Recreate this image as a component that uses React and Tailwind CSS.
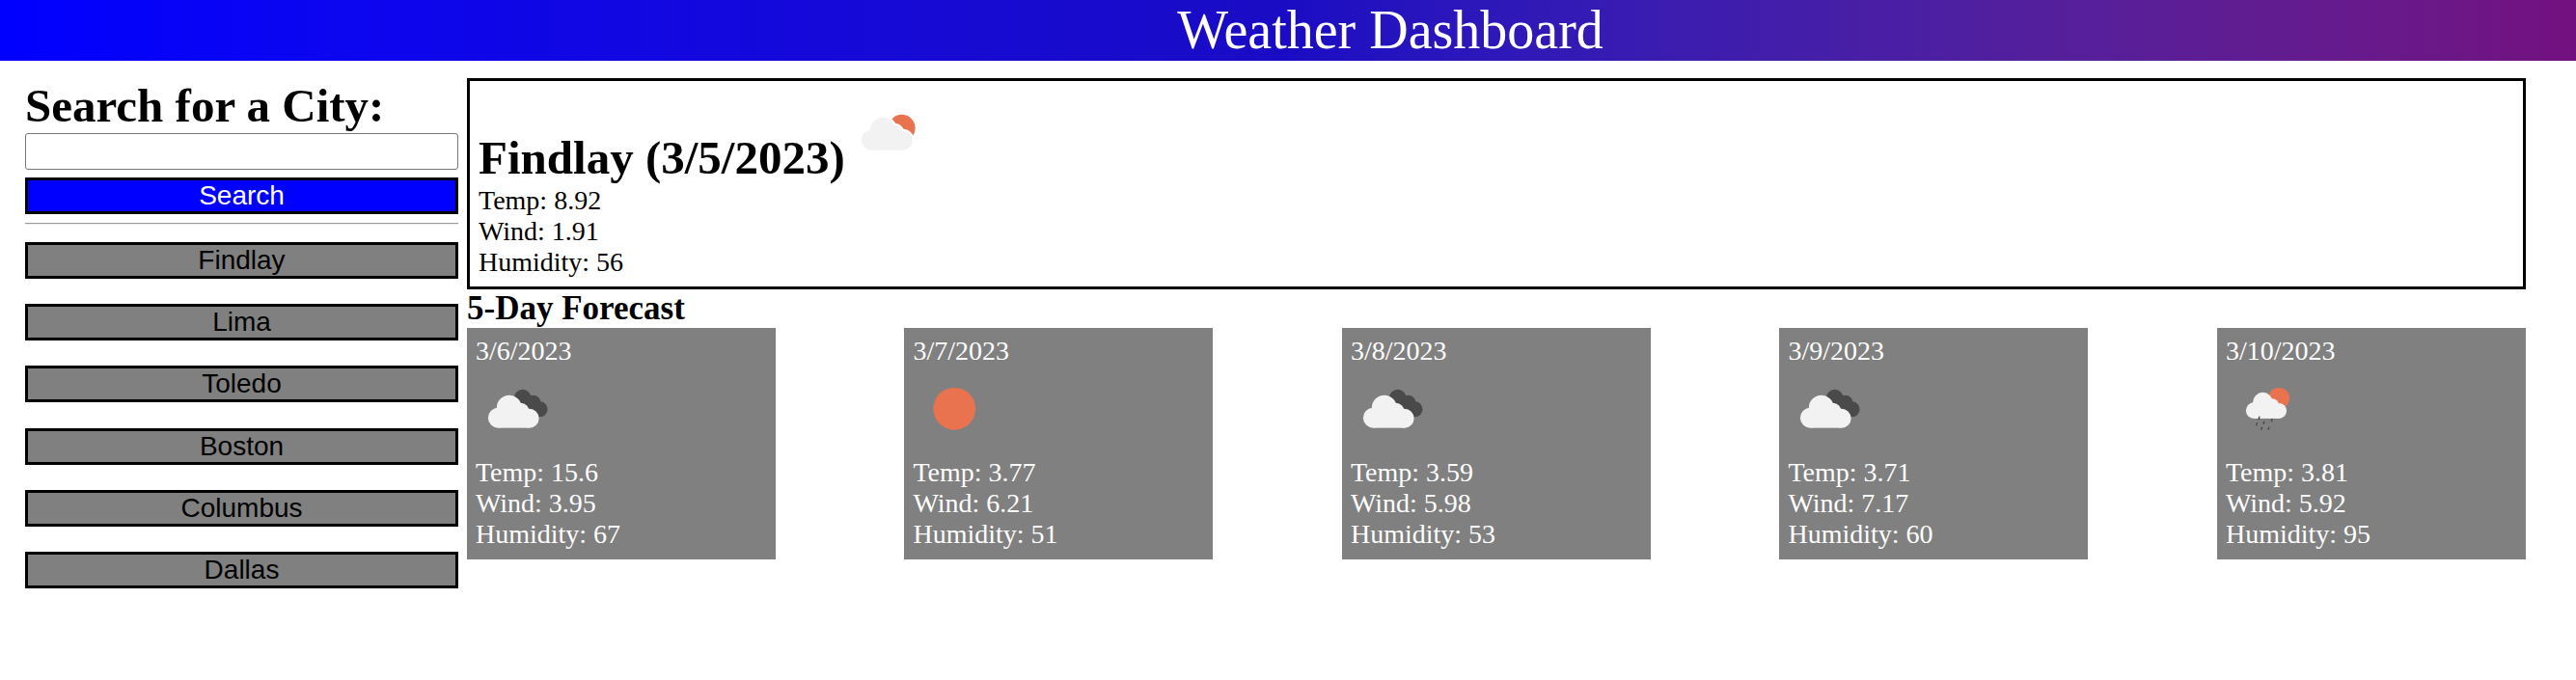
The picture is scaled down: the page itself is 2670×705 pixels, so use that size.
const cities = ['Findlay', 'Lima', 'Toledo', 'Boston', 'Columbus', 'Dallas']

const forecast = [
  { date: '3/6/2023', icon: 'broken', temp: '15.6', wind: '3.95', humidity: '67' },
  { date: '3/7/2023', icon: 'clear', temp: '3.77', wind: '6.21', humidity: '51' },
  { date: '3/8/2023', icon: 'broken', temp: '3.59', wind: '5.98', humidity: '53' },
  { date: '3/9/2023', icon: 'broken', temp: '3.71', wind: '7.17', humidity: '60' },
  { date: '3/10/2023', icon: 'rain', temp: '3.81', wind: '5.92', humidity: '95' },
]

function Cloud({ fill = '#f2f2f2' }) {
  return (
    <g fill={fill}>
      <circle cx="23.5" cy="52.5" r="10.5" />
      <circle cx="35" cy="42" r="13" />
      <circle cx="47" cy="46" r="9" />
      <circle cx="56" cy="53" r="10" />
      <rect x="24" y="48" width="32" height="15" />
    </g>
  )
}

function WeatherIcon({ kind }) {
  return (
    <svg viewBox="0 0 88 88" className="w-[87.5px] h-[87.5px] blur-[0.5px]">
      {kind === 'few' && (
        <g>
          <circle cx="54" cy="38" r="14" fill="#e9734e" />
          <g transform="translate(-1 -2)">
            <circle cx="35" cy="42" r="15" fill="#ffffff" />
            <circle cx="47" cy="46" r="11" fill="#ffffff" />
            <circle cx="56" cy="53" r="12" fill="#ffffff" />
            <Cloud />
          </g>
        </g>
      )}
      {kind === 'broken' && (
        <g>
          <g fill="#4a4a4a">
            <circle cx="49" cy="32" r="9" />
            <circle cx="60" cy="37" r="8" />
            <circle cx="67" cy="43.5" r="8" />
            <circle cx="55" cy="38" r="9" />
          </g>
          <Cloud />
        </g>
      )}
      {kind === 'clear' && <circle cx="43.5" cy="43" r="22" fill="#e9734e" />}
      {kind === 'rain' && (
        <g>
          <circle cx="55.5" cy="32" r="11" fill="#e9734e" />
          <g transform="translate(10.6 2.8) scale(0.8)">
            <Cloud />
          </g>
          <g stroke="#4a4a4a" strokeWidth="1.5" strokeLinecap="round">
            <line x1="35" y1="51.5" x2="34.4" y2="54" />
            <line x1="32.6" y1="58" x2="32" y2="60" />
            <line x1="40" y1="56.5" x2="39.4" y2="58.5" />
            <line x1="48.2" y1="54" x2="47.8" y2="56" />
            <line x1="37.6" y1="62.5" x2="37" y2="64.5" />
            <line x1="45" y1="62.5" x2="44.4" y2="64.5" />
          </g>
        </g>
      )}
    </svg>
  )
}

function ForecastCard({ day }) {
  return (
    <div className="w-[320px] h-[240px] bg-[#808080] text-white px-[9px] pt-[8px]">
      <div>{day.date}</div>
      <div className="h-[94px] pt-[1px]">
        <WeatherIcon kind={day.icon} />
      </div>
      <div>Temp: {day.temp}</div>
      <div>Wind: {day.wind}</div>
      <div>Humidity: {day.humidity}</div>
    </div>
  )
}

export default function App() {
  return (
    <div className="min-h-[705px] bg-white text-black font-['Liberation_Serif',serif] text-[28px] leading-[32px]">
      <header className="h-[63px] pl-[212px] bg-gradient-to-r from-[#0000ff] via-[#1a0cc4] to-[#731080] text-white text-center text-[56px] leading-[63px]">
        Weather Dashboard
      </header>

      <div className="flex pl-[26px]">
        <aside className="w-[449px] pt-[23px]">
          <h2 className="text-[49px] leading-[48px] font-bold whitespace-nowrap">Search for a City:</h2>
          <input type="text" className="block w-full h-[38px] mt-[4px] bg-white border border-[#767676] rounded-[3px]" />
          <button className="block w-full h-[38px] mt-[8px] bg-[#0000ff] text-white border-[3px] border-black font-['Liberation_Sans',sans-serif] text-[28px] leading-[26px]">
            Search
          </button>
          <hr className="mt-[9px] border-t border-b border-t-[#9a9a9a] border-b-[#eeeeee]" />
          <div className="mt-[18px] flex flex-col gap-[26.2px]">
            {cities.map(city => (
              <button key={city} className="block w-full h-[38px] bg-[#808080] text-black border-[3px] border-black font-['Liberation_Sans',sans-serif] text-[28px] leading-[26px]">
                {city}
              </button>
            ))}
          </div>
        </aside>

        <main className="w-[2134px] ml-[9px] pt-[18px]">
          <section className="h-[219px] border-[3px] border-black px-[9px] pt-[6px]">
            <h2 className="text-[49px] leading-[56px] font-bold h-[102px] flex items-end">
              <span>Findlay (3/5/2023)</span>
              <span className="ml-[5px] mb-[10px] shrink-0"><WeatherIcon kind="few" /></span>
            </h2>
            <div>Temp: 8.92</div>
            <div>Wind: 1.91</div>
            <div>Humidity: 56</div>
          </section>
          <h3 className="text-[35px] leading-[38px] font-bold mt-[1px] mb-[1px]">5-Day Forecast</h3>
          <div className="flex justify-between -ml-[0.1px]">
            {forecast.map(day => <ForecastCard key={day.date} day={day} />)}
          </div>
        </main>
      </div>
    </div>
  )
}
